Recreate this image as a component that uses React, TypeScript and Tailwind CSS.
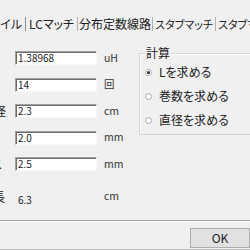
import React from "react";

const jp = "font-['Noto_Sans_CJK_JP',sans-serif] [font-feature-settings:'palt']";

function Field({ label, value, unit, labelPad }: { label: string; value: string; unit: string; labelPad: string }) {
  return (
    <div className="flex items-center h-[14px]">
      <div className="w-[15px] h-[14px] overflow-hidden flex justify-end items-center">
        <span className={`whitespace-nowrap text-[12px] leading-none text-[#222] ${labelPad}`}>{label}</span>
      </div>
      <div className="w-[82px] h-[14px] bg-white border border-t-[#a0a0a0] border-l-[#a0a0a0] border-r-[#f8f8f8] border-b-[#f8f8f8] shadow-[inset_1px_1px_0_#6d6d6d] flex items-center pl-[2px]">
        <span className="text-[10px] leading-none text-[#222]">{value}</span>
      </div>
      <span className="ml-[7px] text-[10.5px] leading-none text-[#333]">{unit}</span>
    </div>
  );
}

function Radio({ label, checked }: { label: string; checked?: boolean }) {
  return (
    <div className="flex items-center h-[14px]">
      <div className="w-[7px] h-[7px] rounded-full border border-[#a8a8a8] bg-white flex items-center justify-center">
        {checked && <div className="w-[3px] h-[3px] rounded-full bg-[#222]" />}
      </div>
      <span className="ml-[7px] text-[12px] leading-none text-[#222]">{label}</span>
    </div>
  );
}

export default function App() {
  return (
    <div className={`w-[250px] h-[250px] bg-[#f0f0f0] overflow-hidden flex flex-col ${jp}`}>
      {/* tabs */}
      <div className="flex mt-[17px] h-[14px] ml-[-15px] text-[12px] leading-none text-[#222] whitespace-nowrap shrink-0">
        <div className="w-[41px] shrink-0 flex items-center justify-end pr-[3px] border-r border-[#8a8a8a]">コイル</div>
        <div className="w-[52px] shrink-0 flex items-center justify-center border-r border-[#b0b0b0]">LCマッチ</div>
        <div className="w-[75px] shrink-0 flex items-center justify-center border-r border-[#b0b0b0]">分布定数線路</div>
        <div className="w-[63px] shrink-0 overflow-hidden flex items-center justify-center border-r border-[#b0b0b0] text-[11px]">スタブマッチ</div>
        <div className="w-[60px] shrink-0 overflow-hidden flex items-center pl-[2px] text-[11px]">スタブマッチ2</div>
      </div>

      {/* body */}
      <div className="flex mt-[20px] h-[169px] shrink-0">
        <div className="flex flex-col gap-[12.5px] w-[139px] shrink-0">
          <Field label="インダクタンス" value="1.38968" unit="uH" labelPad="mr-[24px]" />
          <Field label="巻数" value="14" unit="回" labelPad="mr-[24px]" />
          <Field label="コイル直径" value="2.3" unit="cm" labelPad="mr-[9px]" />
          <Field label="線径" value="2.0" unit="mm" labelPad="mr-[24px]" />
          <Field label="線間スペース" value="2.5" unit="mm" labelPad="mr-[13px]" />
          <div className="flex items-center h-[14px] mt-[6px]">
            <div className="w-[15px] h-[14px] overflow-hidden flex justify-end items-center">
              <span className="whitespace-nowrap text-[12px] leading-none text-[#222] mr-[10px]">コイル長</span>
            </div>
            <div className="w-[82px] pl-[3px]">
              <span className="text-[10px] leading-none text-[#222]">6.3</span>
            </div>
            <span className="ml-[7px] text-[10.5px] leading-none text-[#333]">cm</span>
          </div>
        </div>

        {/* group box */}
        <div className="relative mt-[2px] w-[130px] h-[82px] border border-[#d5d5d5] shadow-[inset_1px_1px_0_#fff] shrink-0">
          <span className="absolute left-[5px] top-[-7px] px-[1px] bg-[#f0f0f0] text-[12px] leading-none text-[#222]">計算</span>
          <div className="flex flex-col gap-[10px] pt-[11px] pl-[5px]">
            <Radio label="Lを求める" checked />
            <Radio label="巻数を求める" />
            <Radio label="直径を求める" />
          </div>
        </div>
      </div>

      {/* separator */}
      <div className="h-[2px] border-t border-[#a0a0a0] border-b border-b-white shrink-0" />

      {/* buttons */}
      <div className="flex pl-[190px] mt-[6px] shrink-0">
        <button className="w-[64px] h-[20px] bg-[#e1e1e1] border border-[#adadad] text-[12px] leading-none text-[#222] flex items-center justify-center">
          OK
        </button>
      </div>
      <div className="h-[1px] bg-[#c0c0c0] mt-[1px] shrink-0" />
    </div>
  );
}
